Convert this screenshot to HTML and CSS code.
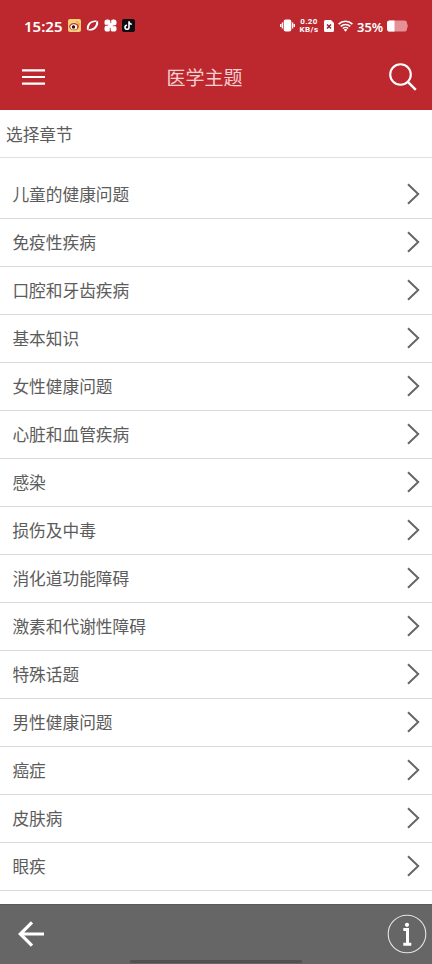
FILE: index.html
```html
<!DOCTYPE html>
<html lang="zh-CN">
<head>
<meta charset="utf-8">
<meta name="viewport" content="width=device-width, initial-scale=1">
<title>医学主题</title>
<link rel="stylesheet" href="styles.css">
</head>
<body>
<div class="app">
  <header class="header">
    <div class="status">
      <div class="status-left">
        <span class="clock">15:25</span>
        <svg class="app-icon" viewBox="0 0 13 13"><rect width="13" height="13" rx="2" fill="#f7cf78"/><ellipse cx="6" cy="7.6" rx="4.8" ry="3.7" fill="#c43a25"/><ellipse cx="5.8" cy="7.9" rx="3.4" ry="2.6" fill="#fff"/><circle cx="5.5" cy="8" r="1.7" fill="#24130f"/><path d="M8.2 2.6a3 3 0 0 1 2.9 3.5" fill="none" stroke="#e98b2c"/></svg>
        <svg class="app-icon" viewBox="0 0 13 13"><path d="M1.200 11.200C-.6 6.500 4 .6 10 1.600L11.400 1.900 9.800 3.100C6 2.600 2.600 6 2.900 9.600z" fill="#fff"/><path d="M11.800 1.800C13.600 6.500 9 12.400 3 11.400L1.600 11.100 3.200 9.900C7 10.400 10.400 7 10.100 3.400z" fill="#fff"/></svg>
        <svg class="app-icon" viewBox="0 0 13 13"><g fill="#fff"><rect x=".5" y=".5" width="6" height="6" rx="2.600"/><rect x="6.500" y=".5" width="6" height="6" rx="2.600"/><rect x=".5" y="6.500" width="6" height="6" rx="2.600"/><rect x="6.500" y="6.500" width="6" height="6" rx="2.600"/><circle cx="6.500" cy="6.500" r="2.800"/></g><path d="M6.800 1v3.200M6.200 8.800V12M1 6.200h3.200M8.800 6.800H12" stroke="#bd282f" stroke-width=".7"/></svg>
        <svg class="app-icon" viewBox="0 0 13 13"><rect width="13" height="13" rx="2" fill="#100c12"/><path d="M7 2.300v6a2 2 0 1 1-2-2M7 2.600c.3 1.700 1.300 2.500 2.800 2.600" fill="none" stroke="#fff" stroke-width="1.600"/></svg>
      </div>
      <div class="status-right">
        <svg class="vibrate" viewBox="0 0 15 13"><rect x="3.700" y=".5" width="7.600" height="12" rx="2" fill="#fff"/><path d="M2.400 3.500v6M12.600 3.500v6M.7 5v3M14.300 5v3" stroke="#fff" stroke-width="1.300"/></svg>
        <span class="speed"><span>0.20</span><span>KB/s</span></span>
        <svg class="sim" viewBox="0 0 10 12"><path d="M1.500 0H7l3 3v7.500A1.500 1.500 0 0 1 8.500 12h-7A1.500 1.500 0 0 1 0 10.500v-9A1.500 1.500 0 0 1 1.500 0z" fill="#fff"/><path d="M3 4.500l4 4M7 4.500l-4 4" stroke="#8d2329" stroke-width="1.500"/></svg>
        <svg class="wifi" viewBox="0 0 15 12"><g fill="none" stroke="#fff" stroke-width="1.600"><path d="M.6 4.100a9.800 9.800 0 0 1 13.800 0"/><path d="M2.800 6.400a6.700 6.700 0 0 1 9.400 0"/><path d="M4.900 8.500a3.700 3.700 0 0 1 5.200 0"/></g><path d="M5.800 9.700a2.400 2.400 0 0 1 3.400 0L7.500 11.700z" fill="#fff"/></svg>
        <span class="percent">35%</span>
        <svg class="battery" viewBox="0 0 22 12"><rect x="0" y=".5" width="20" height="11" rx="2.800" fill="#e49298"/><path d="M20 3.500q1.800 2.500 0 5z" fill="#e49298"/><path d="M2.800.5H7.500v11H2.800A2.800 2.800 0 0 1 0 8.700V3.300A2.800 2.800 0 0 1 2.800.5z" fill="#fff"/></svg>
      </div>
    </div>
    <div class="toolbar">
      <svg class="menu" viewBox="0 0 23 16"><path d="M0 1.300h23M0 8h23M0 14.700h23" stroke="#fff" stroke-width="2.200"/></svg>
      <h1 class="title">医学主题</h1>
      <svg class="search" viewBox="0 0 28 28"><circle cx="11.500" cy="11.500" r="10.300" fill="none" stroke="#fff" stroke-width="2.100"/><path d="M18.800 18.800l8 8" stroke="#fff" stroke-width="2.500"/></svg>
    </div>
  </header>
  <main class="content">
    <h2 class="section">选择章节</h2>
    <ul class="list">
      <li class="row"><span>儿童的健康问题</span><svg class="chevron" viewBox="0 0 13 22"><path d="M1 1.200L11.200 11 1 20.800"/></svg></li>
      <li class="row"><span>免疫性疾病</span><svg class="chevron" viewBox="0 0 13 22"><path d="M1 1.200L11.200 11 1 20.800"/></svg></li>
      <li class="row"><span>口腔和牙齿疾病</span><svg class="chevron" viewBox="0 0 13 22"><path d="M1 1.200L11.200 11 1 20.800"/></svg></li>
      <li class="row"><span>基本知识</span><svg class="chevron" viewBox="0 0 13 22"><path d="M1 1.200L11.200 11 1 20.800"/></svg></li>
      <li class="row"><span>女性健康问题</span><svg class="chevron" viewBox="0 0 13 22"><path d="M1 1.200L11.200 11 1 20.800"/></svg></li>
      <li class="row"><span>心脏和血管疾病</span><svg class="chevron" viewBox="0 0 13 22"><path d="M1 1.200L11.200 11 1 20.800"/></svg></li>
      <li class="row"><span>感染</span><svg class="chevron" viewBox="0 0 13 22"><path d="M1 1.200L11.200 11 1 20.800"/></svg></li>
      <li class="row"><span>损伤及中毒</span><svg class="chevron" viewBox="0 0 13 22"><path d="M1 1.200L11.200 11 1 20.800"/></svg></li>
      <li class="row"><span>消化道功能障碍</span><svg class="chevron" viewBox="0 0 13 22"><path d="M1 1.200L11.200 11 1 20.800"/></svg></li>
      <li class="row"><span>激素和代谢性障碍</span><svg class="chevron" viewBox="0 0 13 22"><path d="M1 1.200L11.200 11 1 20.800"/></svg></li>
      <li class="row"><span>特殊话题</span><svg class="chevron" viewBox="0 0 13 22"><path d="M1 1.200L11.200 11 1 20.800"/></svg></li>
      <li class="row"><span>男性健康问题</span><svg class="chevron" viewBox="0 0 13 22"><path d="M1 1.200L11.200 11 1 20.800"/></svg></li>
      <li class="row"><span>癌症</span><svg class="chevron" viewBox="0 0 13 22"><path d="M1 1.200L11.200 11 1 20.800"/></svg></li>
      <li class="row"><span>皮肤病</span><svg class="chevron" viewBox="0 0 13 22"><path d="M1 1.200L11.200 11 1 20.800"/></svg></li>
      <li class="row"><span>眼疾</span><svg class="chevron" viewBox="0 0 13 22"><path d="M1 1.200L11.200 11 1 20.800"/></svg></li>
    </ul>
  </main>
  <footer class="footer">
    <svg class="back" viewBox="0 0 26 26"><path d="M26 13H2.500M14 1.300L2.300 13 14 24.700" fill="none" stroke="#fff" stroke-width="3.200"/></svg>
    <svg class="info" viewBox="0 0 40 40"><circle cx="20" cy="20" r="18.800" fill="none" stroke="#e4e4e4" stroke-width="1.100"/><circle cx="20" cy="10.800" r="2.100" fill="#fff"/><path d="M16.300 15.600h4.200v14.200M16.300 30.200h8" fill="none" stroke="#fff" stroke-width="3"/></svg>
    <div class="home-bar"></div>
  </footer>
</div>
</body>
</html>
```
FILE: styles.css
```css
* { box-sizing: border-box; }
body {
  margin: 0;
  background: #fff;
  color: #5c5c5c;
  font-family: "Noto Sans CJK SC", sans-serif;
}
svg { display: block; flex: none; }
h1, h2, ul { margin: 0; padding: 0; font-weight: 400; }
.app { display: flex; flex-direction: column; height: 964px; overflow: hidden; }
.header { flex: none; height: 110px; background: #bd282f; color: #fff; }
.status {
  display: flex;
  justify-content: space-between;
  height: 44px;
  padding: 7px 23px 0 24px;
  font-family: "Noto Sans", sans-serif;
}
.status-left, .status-right { display: flex; align-items: center; }
.clock { width: 44px; font-size: 15px; font-weight: 600; line-height: 20px; white-space: nowrap; }
.app-icon { width: 13px; height: 13px; margin-right: 5px; }
.vibrate { width: 15px; height: 13px; }
.speed {
  display: flex;
  flex-direction: column;
  align-items: center;
  gap: 1px;
  width: 20px;
  margin-left: 4px;
  font-family: Roboto, sans-serif;
  font-size: 8px;
  font-weight: 700;
  letter-spacing: 0.4px;
  line-height: 7px;
}
.sim { width: 10px; height: 12px; margin-left: 5px; }
.wifi { width: 15px; height: 12px; margin-left: 4px; }
.percent { width: 26px; margin: 2px 4px 0 4px; font-size: 13px; font-weight: 600; line-height: 20px; }
.battery { width: 22px; height: 12px; }
.toolbar {
  display: grid;
  grid-template-columns: 60px 1fr 60px;
  align-items: center;
  height: 66px;
}
.menu { width: 23px; height: 16px; margin-left: 22px; }
.title { padding-right: 23px; color: #f6d0d1; font-size: 19px; line-height: 28px; text-align: center; }
.search { width: 28px; height: 28px; margin-left: 17px; }
.content { flex: 1; }
.section {
  height: 48px;
  padding-left: 6px;
  border-bottom: 1px solid #e0e0e0;
  font-size: 16.7px;
  line-height: 48px;
}
.list { padding-top: 13px; list-style: none; }
.row {
  display: flex;
  align-items: center;
  justify-content: space-between;
  height: 48px;
  padding: 0 12px 1px 12.4px;
  border-bottom: 1px solid #dcdcdc;
  font-size: 16.7px;
  line-height: 24px;
}
.chevron { width: 13px; height: 22px; margin-bottom: 1px; fill: none; stroke: #666; stroke-width: 2; }
.footer {
  position: relative;
  display: flex;
  flex: none;
  align-items: center;
  justify-content: space-between;
  height: 60px;
  padding: 0 5px 1px 18px;
  border-top: 1px solid #5a5a5a;
  background: #666;
}
.back { width: 26px; height: 26px; }
.info { width: 40px; height: 40px; }
.home-bar {
  position: absolute;
  bottom: 1px;
  left: 130px;
  width: 172px;
  height: 3px;
  border-radius: 2px;
  background: #505050;
}
```
